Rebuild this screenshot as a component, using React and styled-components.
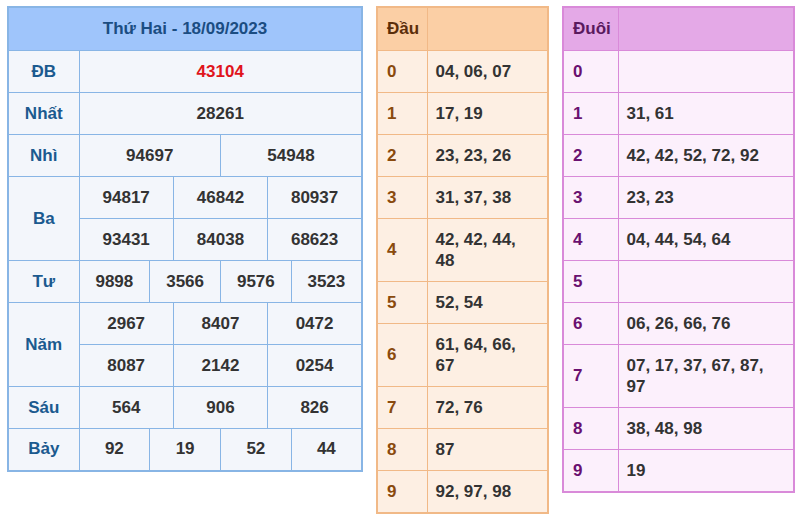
import React from 'react';
import styled, { createGlobalStyle } from 'styled-components';

const Global = createGlobalStyle`
  body { margin: 0; background: #fff; font-family: "Liberation Sans", Arial, sans-serif; }
`;

const prizes = [
  { name: 'ĐB', rows: [['43104']], red: true },
  { name: 'Nhất', rows: [['28261']] },
  { name: 'Nhì', rows: [['94697', '54948']] },
  { name: 'Ba', rows: [['94817', '46842', '80937'], ['93431', '84038', '68623']] },
  { name: 'Tư', rows: [['9898', '3566', '9576', '3523']] },
  { name: 'Năm', rows: [['2967', '8407', '0472'], ['8087', '2142', '0254']] },
  { name: 'Sáu', rows: [['564', '906', '826']] },
  { name: 'Bảy', rows: [['92', '19', '52', '44']] },
];

const dau = ['04, 06, 07', '17, 19', '23, 23, 26', '31, 37, 38', '42, 42, 44, 48', '52, 54', '61, 64, 66, 67', '72, 76', '87', '92, 97, 98'];
const duoi = ['', '31, 61', '42, 42, 52, 72, 92', '23, 23', '04, 44, 54, 64', '', '06, 26, 66, 76', '07, 17, 37, 67, 87, 97', '38, 48, 98', '19'];

const palettes = {
  blue: { head: '#9fc5fb', headText: '#1b4d82', body: '#f3f6fb', border: '#88b5e5', key: '#1b5a8f' },
  orange: { head: '#fbcfa5', headText: '#5b2e0a', body: '#fdefe3', border: '#f1b987', key: '#8a4a0d' },
  purple: { head: '#e4a9e7', headText: '#5a1a5e', body: '#fcf0fc', border: '#d98ad9', key: '#6a1070' },
};

export default function App() {
  return (
    <>
      <Global />
      <Page>
        <Table $w={356} $p={palettes.blue}>
          <colgroup>
            <col style={{ width: 71 }} />
            {Array.from({ length: 12 }).map((_, i) => <col key={i} />)}
          </colgroup>
          <tbody>
            <tr><Head colSpan={13}>Thứ Hai - 18/09/2023</Head></tr>
            {prizes.map(p => p.rows.map((r, ri) => (
              <tr key={p.name + ri}>
                {ri === 0 && <Label rowSpan={p.rows.length}>{p.name}</Label>}
                {r.map((n, i) => <Num key={i} colSpan={12 / r.length} $red={p.red}>{n}</Num>)}
              </tr>
            )))}
          </tbody>
        </Table>
        <Table $w={173} $p={palettes.orange}>
          <colgroup><col style={{ width: 50 }} /><col /></colgroup>
          <tbody>
            <tr><Head $left>Đầu</Head><Head /></tr>
            {dau.map((v, i) => (
              <tr key={i}><Key>{i}</Key><Val>{v}</Val></tr>
            ))}
          </tbody>
        </Table>
        <Table $w={233} $p={palettes.purple}>
          <colgroup><col style={{ width: 55 }} /><col /></colgroup>
          <tbody>
            <tr><Head $left>Đuôi</Head><Head /></tr>
            {duoi.map((v, i) => (
              <tr key={i}><Key>{i}</Key><Val>{v}</Val></tr>
            ))}
          </tbody>
        </Table>
      </Page>
    </>
  );
}

const Page = styled.div`
  display: flex;
  align-items: flex-start;
  gap: 13px;
  padding: 6px 7px;
`;

const Table = styled.table`
  width: ${p => p.$w}px;
  table-layout: fixed;
  border-collapse: collapse;
  border: 2px solid ${p => p.$p.border};
  font-size: 17px;
  font-weight: bold;
  color: #333;
  td { border: 1px solid ${p => p.$p.border}; background: ${p => p.$p.body}; height: 42px; box-sizing: border-box; }
  th { background: ${p => p.$p.head}; color: ${p => p.$p.headText}; border: 1px solid ${p => p.$p.border}; }
  th, td { --k: ${p => p.$p.key}; }
`;

const Head = styled.th`
  height: 42px;
  font-size: 17px;
  text-align: ${p => (p.$left ? 'left' : 'center')};
  padding: 0 9px;
`;

const Label = styled.td`
  text-align: center;
  color: var(--k);
`;

const Num = styled.td`
  text-align: center;
  color: ${p => (p.$red ? '#e0141b' : '#333')};
`;

const Key = styled.td`
  color: var(--k);
  padding: 0 9px;
`;

const Val = styled.td`
  padding: 10px 14px 10px 8px;
  line-height: 21px;
`;
